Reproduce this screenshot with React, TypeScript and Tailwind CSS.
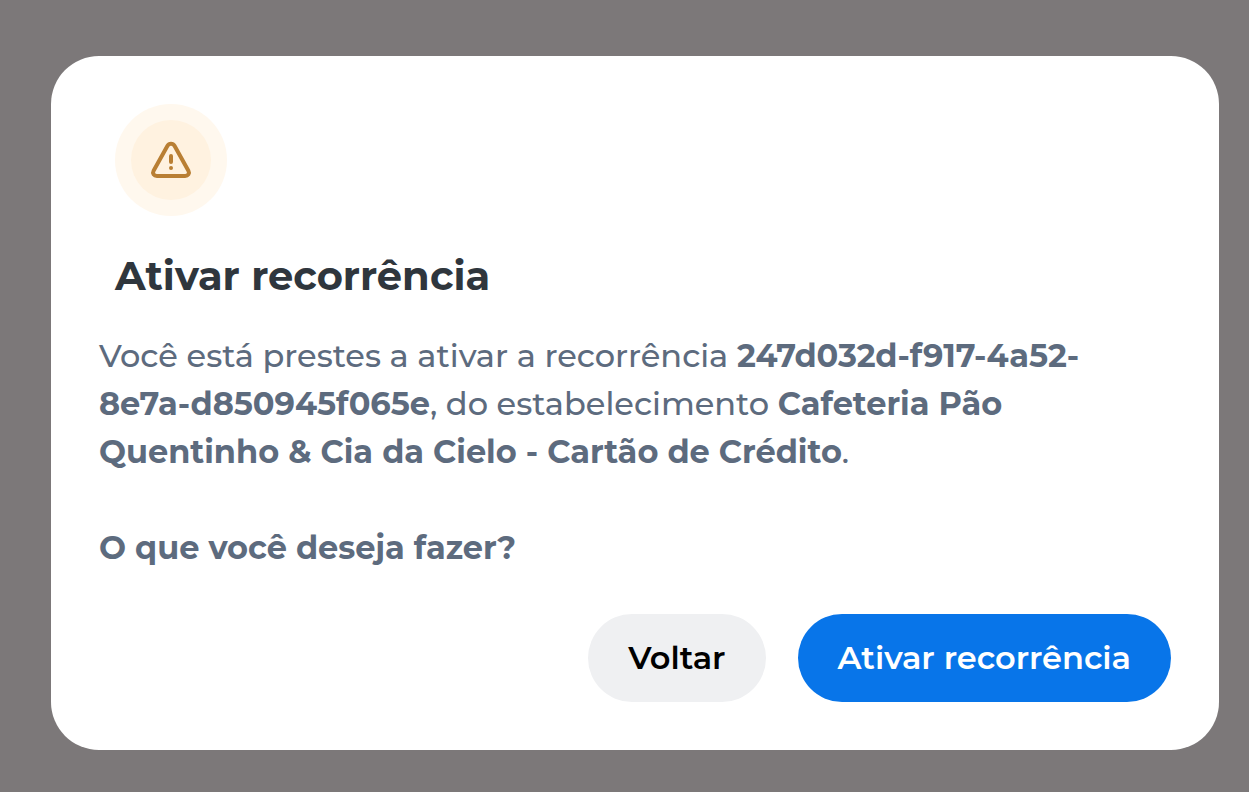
export default function App() {
  return (
    <div className="flex min-h-screen items-start bg-[#7c7879] pt-14 pr-[30px] pb-[42px] pl-[51px] font-['Montserrat','Inter',sans-serif]">
      <section
        role="dialog"
        aria-modal="true"
        aria-labelledby="dialog-title"
        className="w-full rounded-[48px] bg-white p-12"
      >
        <header className="px-4">
          <WarningBadge />
          <h2 id="dialog-title" className="mt-9 text-[40px] leading-12 font-bold text-[#2f363d]">
            Ativar recorrência
          </h2>
        </header>

        <div className="mt-8 pr-4 text-[32px] leading-12 font-medium text-[#5d6b7e]">
          <p>
            Você está prestes a ativar a recorrência{' '}
            <strong className="font-bold">247d032d-f917-4a52-8e7a-d850945f065e</strong>, do estabelecimento{' '}
            <strong className="font-bold">Cafeteria Pão Quentinho &amp; Cia da Cielo - Cartão de Crédito</strong>.
          </p>
          <p className="mt-12 font-bold">O que você deseja fazer?</p>
        </div>

        <footer className="mt-[42px] flex justify-end gap-8 text-[32px] leading-12 font-semibold">
          <button type="button" className="rounded-full bg-[#eff0f2] px-10 py-5 text-black">
            Voltar
          </button>
          <button type="button" className="rounded-full bg-[#0875e9] px-10 py-5 text-white">
            Ativar recorrência
          </button>
        </footer>
      </section>
    </div>
  )
}

function WarningBadge() {
  return (
    <div className="flex size-28 items-center justify-center rounded-full bg-[#fff8ee]">
      <div className="flex size-20 items-center justify-center rounded-full bg-[#fff2e0]">
        <svg viewBox="0 0 48 48" className="size-12" fill="none" stroke="#b97f34" strokeWidth="4" strokeLinecap="round" strokeLinejoin="round" aria-hidden="true">
          <path d="M20.5 9.8 6.6 34.8c-1.5 2.7.4 5.2 3.3 5.2h28.2c2.9 0 4.8-2.5 3.3-5.2L27.5 9.8c-1.6-2.8-5.4-2.8-7 0Z" />
          <path d="M24 20v6M24 32h.02" />
        </svg>
      </div>
    </div>
  )
}
